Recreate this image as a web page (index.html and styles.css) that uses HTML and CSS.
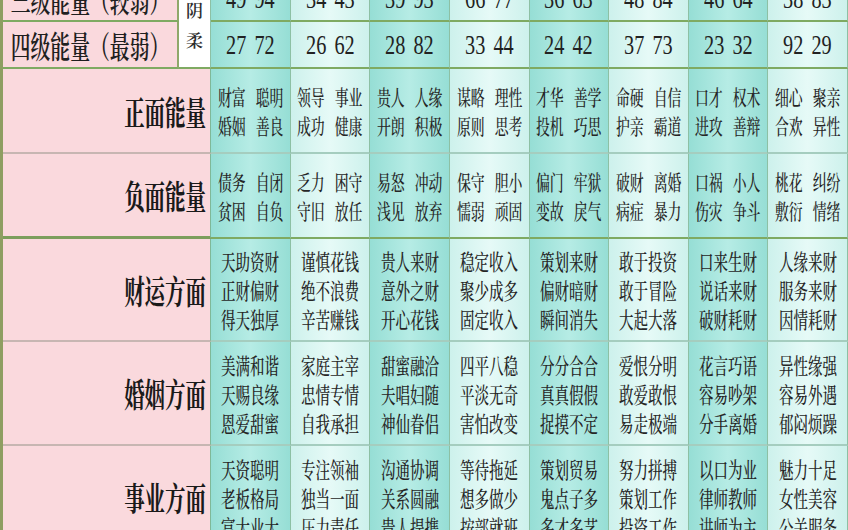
FILE: index.html
```html
<!DOCTYPE html>
<html lang="zh-CN">
<head>
<meta charset="utf-8">
<title>能量对照表</title>
<link rel="stylesheet" href="styles.css">
</head>
<body>
<div class="sheet">
  <div class="table">
    <div class="cell lab-top bg"><span class="t-top">三级能量（较弱）</span></div>
    <div class="cell yin"><span class="t-yin">阴<br>柔</span></div>
    <div class="cell d bg"><span class="t-num">49 94</span></div>
    <div class="cell l bg"><span class="t-num">34 43</span></div>
    <div class="cell d bg"><span class="t-num">39 93</span></div>
    <div class="cell l bg"><span class="t-num">66 77</span></div>
    <div class="cell d bg"><span class="t-num">36 63</span></div>
    <div class="cell l bg"><span class="t-num">48 84</span></div>
    <div class="cell d bg"><span class="t-num">46 64</span></div>
    <div class="cell l bg"><span class="t-num">38 83</span></div>

    <div class="cell lab-top bg"><span class="t-top">四级能量（最弱）</span></div>
    <div class="cell d bg"><span class="t-num">27 72</span></div>
    <div class="cell l bg"><span class="t-num">26 62</span></div>
    <div class="cell d bg"><span class="t-num">28 82</span></div>
    <div class="cell l bg"><span class="t-num">33 44</span></div>
    <div class="cell d bg"><span class="t-num">24 42</span></div>
    <div class="cell l bg"><span class="t-num">37 73</span></div>
    <div class="cell d bg"><span class="t-num">23 32</span></div>
    <div class="cell l bg"><span class="t-num">92 29</span></div>

    <div class="cell lab"><span class="t-lab">正面能量</span></div>
    <div class="cell d"><div class="t-two"><p>财富 聪明</p><p>婚姻 善良</p></div></div>
    <div class="cell l"><div class="t-two"><p>领导 事业</p><p>成功 健康</p></div></div>
    <div class="cell d"><div class="t-two"><p>贵人 人缘</p><p>开朗 积极</p></div></div>
    <div class="cell l"><div class="t-two"><p>谋略 理性</p><p>原则 思考</p></div></div>
    <div class="cell d"><div class="t-two"><p>才华 善学</p><p>投机 巧思</p></div></div>
    <div class="cell l"><div class="t-two"><p>命硬 自信</p><p>护亲 霸道</p></div></div>
    <div class="cell d"><div class="t-two"><p>口才 权术</p><p>进攻 善辩</p></div></div>
    <div class="cell l"><div class="t-two"><p>细心 聚亲</p><p>合欢 异性</p></div></div>

    <div class="cell lab bg"><span class="t-lab">负面能量</span></div>
    <div class="cell d bg"><div class="t-two"><p>债务 自闭</p><p>贫困 自负</p></div></div>
    <div class="cell l bg"><div class="t-two"><p>乏力 困守</p><p>守旧 放任</p></div></div>
    <div class="cell d bg"><div class="t-two"><p>易怒 冲动</p><p>浅见 放弃</p></div></div>
    <div class="cell l bg"><div class="t-two"><p>保守 胆小</p><p>懦弱 顽固</p></div></div>
    <div class="cell d bg"><div class="t-two"><p>偏门 牢狱</p><p>变故 戾气</p></div></div>
    <div class="cell l bg"><div class="t-two"><p>破财 离婚</p><p>病症 暴力</p></div></div>
    <div class="cell d bg"><div class="t-two"><p>口祸 小人</p><p>伤灾 争斗</p></div></div>
    <div class="cell l bg"><div class="t-two"><p>桃花 纠纷</p><p>敷衍 情绪</p></div></div>

    <div class="cell lab"><span class="t-lab">财运方面</span></div>
    <div class="cell d"><div class="t-three"><p>天助资财</p><p>正财偏财</p><p>得天独厚</p></div></div>
    <div class="cell l"><div class="t-three"><p>谨慎花钱</p><p>绝不浪费</p><p>辛苦赚钱</p></div></div>
    <div class="cell d"><div class="t-three"><p>贵人来财</p><p>意外之财</p><p>开心花钱</p></div></div>
    <div class="cell l"><div class="t-three"><p>稳定收入</p><p>聚少成多</p><p>固定收入</p></div></div>
    <div class="cell d"><div class="t-three"><p>策划来财</p><p>偏财暗财</p><p>瞬间消失</p></div></div>
    <div class="cell l"><div class="t-three"><p>敢于投资</p><p>敢于冒险</p><p>大起大落</p></div></div>
    <div class="cell d"><div class="t-three"><p>口来生财</p><p>说话来财</p><p>破财耗财</p></div></div>
    <div class="cell l"><div class="t-three"><p>人缘来财</p><p>服务来财</p><p>因情耗财</p></div></div>

    <div class="cell lab"><span class="t-lab">婚姻方面</span></div>
    <div class="cell d"><div class="t-three"><p>美满和谐</p><p>天赐良缘</p><p>恩爱甜蜜</p></div></div>
    <div class="cell l"><div class="t-three"><p>家庭主宰</p><p>忠情专情</p><p>自我承担</p></div></div>
    <div class="cell d"><div class="t-three"><p>甜蜜融洽</p><p>夫唱妇随</p><p>神仙眷侣</p></div></div>
    <div class="cell l"><div class="t-three"><p>四平八稳</p><p>平淡无奇</p><p>害怕改变</p></div></div>
    <div class="cell d"><div class="t-three"><p>分分合合</p><p>真真假假</p><p>捉摸不定</p></div></div>
    <div class="cell l"><div class="t-three"><p>爱恨分明</p><p>敢爱敢恨</p><p>易走极端</p></div></div>
    <div class="cell d"><div class="t-three"><p>花言巧语</p><p>容易吵架</p><p>分手离婚</p></div></div>
    <div class="cell l"><div class="t-three"><p>异性缘强</p><p>容易外遇</p><p>郁闷烦躁</p></div></div>

    <div class="cell lab"><span class="t-lab">事业方面</span></div>
    <div class="cell d"><div class="t-three"><p>天资聪明</p><p>老板格局</p><p>富大业大</p></div></div>
    <div class="cell l"><div class="t-three"><p>专注领袖</p><p>独当一面</p><p>压力责任</p></div></div>
    <div class="cell d"><div class="t-three"><p>沟通协调</p><p>关系圆融</p><p>贵人提携</p></div></div>
    <div class="cell l"><div class="t-three"><p>等待拖延</p><p>想多做少</p><p>按部就班</p></div></div>
    <div class="cell d"><div class="t-three"><p>策划贸易</p><p>鬼点子多</p><p>多才多艺</p></div></div>
    <div class="cell l"><div class="t-three"><p>努力拼搏</p><p>策划工作</p><p>投资工作</p></div></div>
    <div class="cell d"><div class="t-three"><p>以口为业</p><p>律师教师</p><p>讲师为主</p></div></div>
    <div class="cell l"><div class="t-three"><p>魅力十足</p><p>女性美容</p><p>公关服务</p></div></div>
  </div>
</div>
</body>
</html>
```
FILE: styles.css
```css
html, body {
  margin: 0;
  padding: 0;
  background: #fad9dd;
}
body {
  width: 848px;
  height: 530px;
  overflow: hidden;
  font-family: "Noto Serif CJK SC", "Noto Sans CJK SC", "Liberation Serif", serif;
  color: #2b2b2b;
}
.sheet {
  width: 848px;
  height: 530px;
  overflow: hidden;
}
.table {
  display: grid;
  grid-template-columns: 176px 32px repeat(8, 1fr);
  grid-template-rows: 44px 47px 85px 85px 103px 104px 104px;
  width: 848px;
  box-sizing: border-box;
  border-left: 3px solid #8e9e62;
  margin-top: -22px;
}
.cell {
  box-sizing: border-box;
  display: flex;
  flex-direction: column;
  align-items: center;
  justify-content: center;
  border-right: 1px solid #8dc0a4;
  border-bottom: 2px solid #a5cdbf;
  overflow: visible;
  min-width: 0;
}
.d {
  background: linear-gradient(90deg, #96ded5 0%, #b6ece5 50%, #96ded5 100%);
}
.l {
  background: linear-gradient(90deg, #cdf1ec 0%, #e6faf7 50%, #cdf1ec 100%);
}
.lab-top {
  background: #fad9dd;
  border-right: 2px solid #8fa86a;
}
.lab {
  grid-column: span 2;
  background: #fad9dd;
  align-items: flex-end;
  padding-right: 4px;
  border-bottom-color: #c7b6b2;
  border-right-color: #7fb898;
}
.yin {
  grid-row: span 2;
  background: #ffffff;
  border-bottom: 2px solid #7faa62;
  justify-content: flex-start;
}
.bg {
  border-bottom-color: #7faa62;
}
.lab.bg {
  border-bottom: 3px solid #7c9e5c;
}
.t-top {
  display: inline-block;
  white-space: nowrap;
  font-size: 31px;
  line-height: 36px;
  font-weight: 600;
  color: #1f1f1f;
  transform: scaleX(0.64);
}
.t-lab {
  display: inline-block;
  white-space: nowrap;
  font-size: 33px;
  line-height: 38px;
  font-weight: 700;
  color: #1a1a1a;
  transform: scaleX(0.62);
  transform-origin: right center;
}
.t-yin {
  display: inline-block;
  font-size: 17px;
  line-height: 30px;
  font-weight: 600;
  color: #2b2b2b;
  margin-top: 17px;
}
.t-num {
  display: inline-block;
  white-space: nowrap;
  font-family: "Liberation Serif", serif;
  font-size: 27px;
  line-height: 30px;
  word-spacing: 4px;
  color: #222;
  transform: scaleX(0.75);
}
.t-two, .t-three {
  transform: scaleX(0.66);
  white-space: nowrap;
  text-align: center;
  color: #262626;
  font-weight: 500;
}
.t-two p, .t-three p {
  margin: 0;
  font-size: 21px;
  line-height: 29px;
}
.t-two p {
  word-spacing: 10px;
}
.t-three p {
  font-size: 22px;
}
```
